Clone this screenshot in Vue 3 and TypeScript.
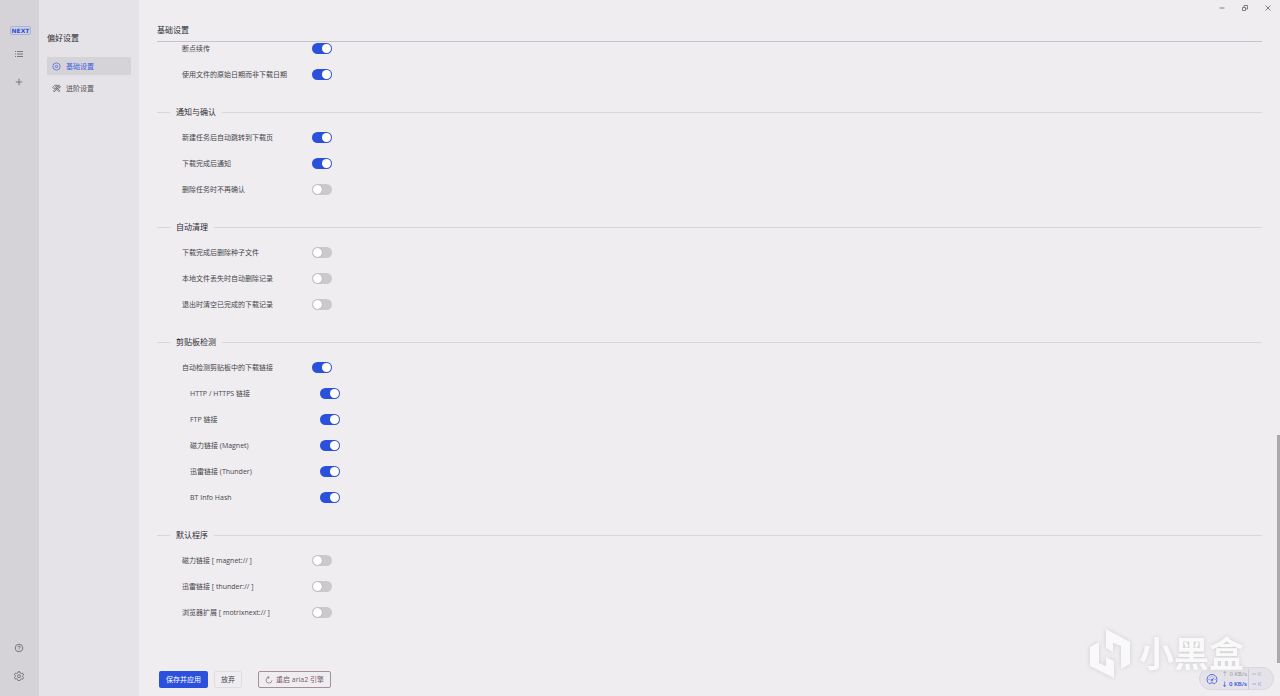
<script setup lang="ts">
import { reactive, ref } from 'vue'

interface Option {
  id: string
  label: string
  on: boolean
  nested?: boolean
}

interface Section {
  title: string
  options: Option[]
}

const sections = reactive<Section[]>([
  {
    title: '',
    options: [
      { id: 'resume', label: '断点续传', on: true },
      { id: 'file-date', label: '使用文件的原始日期而非下载日期', on: true },
    ],
  },
  {
    title: '通知与确认',
    options: [
      { id: 'jump', label: '新建任务后自动跳转到下载页', on: true },
      { id: 'notify', label: '下载完成后通知', on: true },
      { id: 'no-confirm', label: '删除任务时不再确认', on: false },
    ],
  },
  {
    title: '自动清理',
    options: [
      { id: 'del-torrent', label: '下载完成后删除种子文件', on: false },
      { id: 'del-missing', label: '本地文件丢失时自动删除记录', on: false },
      { id: 'clear-exit', label: '退出时清空已完成的下载记录', on: false },
    ],
  },
  {
    title: '剪贴板检测',
    options: [
      { id: 'clip', label: '自动检测剪贴板中的下载链接', on: true },
      { id: 'clip-http', label: 'HTTP / HTTPS 链接', on: true, nested: true },
      { id: 'clip-ftp', label: 'FTP 链接', on: true, nested: true },
      { id: 'clip-magnet', label: '磁力链接 (Magnet)', on: true, nested: true },
      { id: 'clip-thunder', label: '迅雷链接 (Thunder)', on: true, nested: true },
      { id: 'clip-bt', label: 'BT Info Hash', on: true, nested: true },
    ],
  },
  {
    title: '默认程序',
    options: [
      { id: 'magnet', label: '磁力链接 [ magnet:// ]', on: false },
      { id: 'thunder', label: '迅雷链接 [ thunder:// ]', on: false },
      { id: 'motrix', label: '浏览器扩展 [ motrixnext:// ]', on: false },
    ],
  },
])

const tab = ref('basic')
</script>

<template>
  <div class="window">
    <nav class="rail" aria-label="主导航">
      <span class="brand">NEXT</span>
      <button class="icon-btn" aria-label="任务列表">
        <svg viewBox="0 0 10 10"><path d="M3 2.500h6M3 5h6M3 7.500h6M1 2.500h1M1 5h1M1 7.500h1" /></svg>
      </button>
      <button class="icon-btn" aria-label="新建任务">
        <svg viewBox="0 0 10 10"><path d="M5 1.800v6.400M1.800 5h6.400" /></svg>
      </button>
      <span class="spacer"></span>
      <button class="icon-btn" aria-label="帮助">
        <svg viewBox="0 0 10 10">
          <circle cx="5" cy="5" r="3.800" />
          <path d="M3.900 4.100c0-1.500 2.300-1.500 2.300 0 0 .8-1.200.8-1.200 1.700M5 6.700v.6" />
        </svg>
      </button>
      <button class="icon-btn" aria-label="设置">
        <svg viewBox="0 0 10 10">
          <path d="M4 .8h2l.4 1.300 1 .5 1.300-.4.9 1.700-1 .9v.9l1 .9-.9 1.600-1.300-.3-1 .6L6 9.600H4l-.4-1.200-1-.6-1.300.3-.9-1.600 1-.9v-.9l-1-.9.9-1.600 1.300.3 1-.5z" />
          <circle cx="5" cy="5.200" r="1.500" />
        </svg>
      </button>
    </nav>

    <aside class="side">
      <h1>偏好设置</h1>
      <a href="#basic" :class="{ active: tab === 'basic' }" @click.prevent="tab = 'basic'">
        <svg viewBox="0 0 10 10">
          <path d="M5 .8l1.300.7 1.900.7.500 1.700.2 1.100-.2 1.100-.5 1.700-1.900.7L5 9.200l-1.300-.7-1.900-.7-.5-1.700L1.100 5l.2-1.100.5-1.700 1.900-.7z" />
          <circle cx="5" cy="5" r="1.300" />
        </svg>
        <span>基础设置</span>
      </a>
      <a href="#advanced" :class="{ active: tab === 'advanced' }" @click.prevent="tab = 'advanced'">
        <svg viewBox="0 0 10 10">
          <path d="M.8 3.800L3.200 1.400h2.600L4.300 3l4.400 4.600-1 1L3.300 4l-1.100 1.200zM9.200 2.500L8 3.700l-1-.9 1.200-1.300C6.800 1 5.700 2.200 6.100 3.400L1.500 7.700l1 1 4.400-4.300c1.500.4 2.700-.6 2.300-1.900z" />
        </svg>
        <span>进阶设置</span>
      </a>
    </aside>

    <main class="main">
      <header class="head"><h2>基础设置</h2></header>
      <form class="settings" @submit.prevent>
        <section v-for="(section, i) in sections" :key="i">
          <h3 v-if="section.title">{{ section.title }}</h3>
          <div v-for="o in section.options" :key="o.id" class="row" :class="{ nested: o.nested }">
            <label :for="o.id">{{ o.label }}</label>
            <input :id="o.id" v-model="o.on" type="checkbox" role="switch" />
          </div>
        </section>
      </form>
      <footer class="actions">
        <button class="btn primary">保存并应用</button>
        <button class="btn plain">放弃</button>
        <button class="btn restart">
          <svg viewBox="0 0 10 10"><path d="M5 1.500A3.700 3.700 0 1 0 8.700 5.500M3 .9l2.200.6-.8 2" /></svg>
          <span>重启 aria2 引擎</span>
        </button>
      </footer>
    </main>

    <div class="win-controls">
      <button aria-label="最小化"><svg viewBox="0 0 8 8"><path d="M1.500 4h5" /></svg></button>
      <button aria-label="还原">
        <svg viewBox="0 0 8 8"><path d="M1.500 3.500h3v3h-3zM3 3.200V1.500h3.500V5H4.800" /></svg>
      </button>
      <button aria-label="关闭"><svg viewBox="0 0 8 8"><path d="M1.500 1.500l5 5M6.500 1.500l-5 5" /></svg></button>
    </div>

    <div class="thumb"></div>

    <div class="speed">
      <svg viewBox="0 0 12 12">
        <path d="M3 10.500C-.5 8 1 1.500 6 1.500s6.500 6.500 3 9c-1.200.6-1.300-.7-3-.7s-1.800 1.300-3 .7zM5.800 7.200L8.200 4.600M2.600 6.500h.9M8.700 6.500h.8M3.600 3.900l.6.600M6 2.800v.8" />
        <circle cx="5.800" cy="7.200" r=".8" />
      </svg>
      <div class="rates">
        <span class="up">↑ 0 KB/s</span><span class="limit">∞ K</span>
        <span class="down">↓ 0 KB/s</span><span class="limit blue">∞ K</span>
      </div>
    </div>

    <div class="watermark">
      <svg viewBox="0 0 44 52">
        <path d="M2 20L11 15v21l7 3v-9l8 4v17L2 39z" />
        <path d="M18 2l24 13v22l-9 5V19l-8-3v9l-7-4z" />
      </svg>
      <span>小黑盒</span>
    </div>
  </div>
</template>

<style>
body {
  margin: 0;
}
</style>

<style scoped>
.window {
  position: relative;
  display: flex;
  height: 100vh;
  overflow: hidden;
  background: #efedf0;
  color: #46464c;
  font-family: "Open Sans", "Noto Sans CJK SC", sans-serif;
  font-size: 7px;
  line-height: 12px;
}
h1,
h2,
h3 {
  margin: 0;
  font-size: 8px;
  font-weight: 400;
  color: #2c2c31;
}
button {
  padding: 0;
  border: 0;
  background: none;
  font: inherit;
  color: inherit;
}
svg {
  display: block;
  flex: none;
  fill: none;
  stroke: currentColor;
  stroke-width: 0.8;
}
.rail {
  box-sizing: border-box;
  width: 39px;
  flex: none;
  display: flex;
  flex-direction: column;
  align-items: center;
  gap: 18px;
  padding: 26px 1px 15px 0;
  background: #d5d3d8;
  color: #626267;
}
.brand {
  box-sizing: border-box;
  height: 9px;
  width: 21px;
  margin: 0 0 -6px 3px;
  border: 1px solid #a5b2e2;
  border-radius: 2px;
  color: #2a50dc;
  font: 700 6px/7px "DejaVu Sans", sans-serif;
  text-align: center;
}
.icon-btn svg {
  width: 10px;
  height: 10px;
}
.icon-btn {
  height: 10px;
}
.brand + .icon-btn {
  margin-top: 2px;
}
.spacer {
  flex: 1;
}
.side {
  box-sizing: border-box;
  width: 100px;
  flex: none;
  padding: 32px 8px 0;
  background: #e5e3e8;
}
.side h1 {
  margin-bottom: 13px;
}
.side a {
  display: flex;
  align-items: center;
  gap: 5px;
  height: 18px;
  margin-bottom: 4px;
  padding-left: 5px;
  color: #55555a;
  text-decoration: none;
}
.side a span {
  padding-top: 1px;
}
.side a.active {
  background: #d5d3d8;
  color: #3d60e0;
}
.side a svg {
  width: 9px;
  height: 9px;
}
.main {
  flex: 1;
  min-width: 0;
  display: flex;
  flex-direction: column;
  padding: 0 18px;
}
.head {
  box-sizing: border-box;
  height: 42px;
  flex: none;
  padding-top: 24px;
  border-bottom: 1px solid #c4c3cf;
}
.settings {
  flex: 1;
  min-height: 0;
  overflow: hidden;
}
.settings section:first-child {
  margin-top: -7px;
}
h3 {
  display: flex;
  align-items: center;
  gap: 6px;
  height: 20px;
  margin: 15px 0 2px;
}
h3::before,
h3::after {
  content: "";
  height: 1px;
  background: #d8d6dd;
}
h3::before {
  width: 13px;
}
h3::after {
  flex: 1;
}
.row {
  display: grid;
  grid-template-columns: 130px auto;
  justify-content: start;
  align-items: center;
  height: 26px;
  padding-left: 25px;
}
.row.nested {
  padding-left: 33px;
}
.row label {
  padding-top: 2px;
  white-space: nowrap;
}
.row input {
  appearance: none;
  box-sizing: border-box;
  width: 20px;
  height: 11px;
  margin: 0;
  padding: 1px;
  border-radius: 6px;
  background: #cbc9cc;
  display: flex;
}
.row input::before {
  content: "";
  width: 9px;
  height: 9px;
  border-radius: 50%;
  background: #fff;
  box-shadow: 0 0 1px #77777a;
}
.row input:checked {
  justify-content: flex-end;
  background: #2a50dc;
}
.actions {
  flex: none;
  display: flex;
  align-items: center;
  padding: 0 2px 8px;
}
.btn {
  box-sizing: border-box;
  height: 17px;
  border-radius: 2px;
  white-space: nowrap;
}
.primary {
  width: 49px;
  background: #2a50dc;
  color: #fff;
}
.plain {
  width: 28px;
  margin-left: 6px;
  border: 1px solid #dfdde2;
}
.restart {
  display: flex;
  align-items: center;
  justify-content: center;
  gap: 3px;
  width: 73px;
  margin-left: 16px;
  border: 1px solid #a58e98;
  color: #7a5b68;
}
.restart svg {
  width: 8px;
  height: 8px;
}
.win-controls {
  position: absolute;
  top: 4px;
  right: 8px;
  display: flex;
  gap: 15px;
  color: #66666a;
}
.win-controls svg {
  width: 8px;
  height: 8px;
}
.thumb {
  position: absolute;
  right: 0;
  top: 435px;
  width: 3px;
  height: 228px;
  background: #aaa9ab;
}
.speed {
  position: absolute;
  right: 6px;
  bottom: 6px;
  box-sizing: border-box;
  width: 75px;
  height: 23px;
  display: flex;
  align-items: center;
  gap: 3px;
  padding-left: 6px;
  border: 1px solid #d9d7df;
  border-radius: 12px;
  background: #e5e3e9;
  color: #2a50dc;
}
.speed svg {
  width: 12px;
  height: 12px;
}
.rates {
  display: grid;
  grid-template-columns: 26px auto;
  column-gap: 1px;
  line-height: 10px;
  font-size: 6px;
  white-space: nowrap;
}
.up {
  justify-self: end;
  color: #929197;
}
.down {
  justify-self: end;
  font-weight: 600;
}
.limit {
  padding-left: 3px;
  border-left: 1px solid #cccbd5;
  color: #b2b1b8;
}
.limit.blue {
  color: #8c9fe6;
}
.watermark {
  position: absolute;
  right: 36px;
  bottom: 17px;
  display: flex;
  align-items: center;
  gap: 7px;
  color: #f9f9fa;
  filter: drop-shadow(0 0 2px #cfcdd1);
  font: 700 35px/48px "Noto Sans CJK SC", sans-serif;
  pointer-events: none;
}
.watermark svg {
  width: 44px;
  height: 52px;
  fill: currentColor;
  stroke: none;
}
.watermark span {
  padding-bottom: 3px;
}
</style>
